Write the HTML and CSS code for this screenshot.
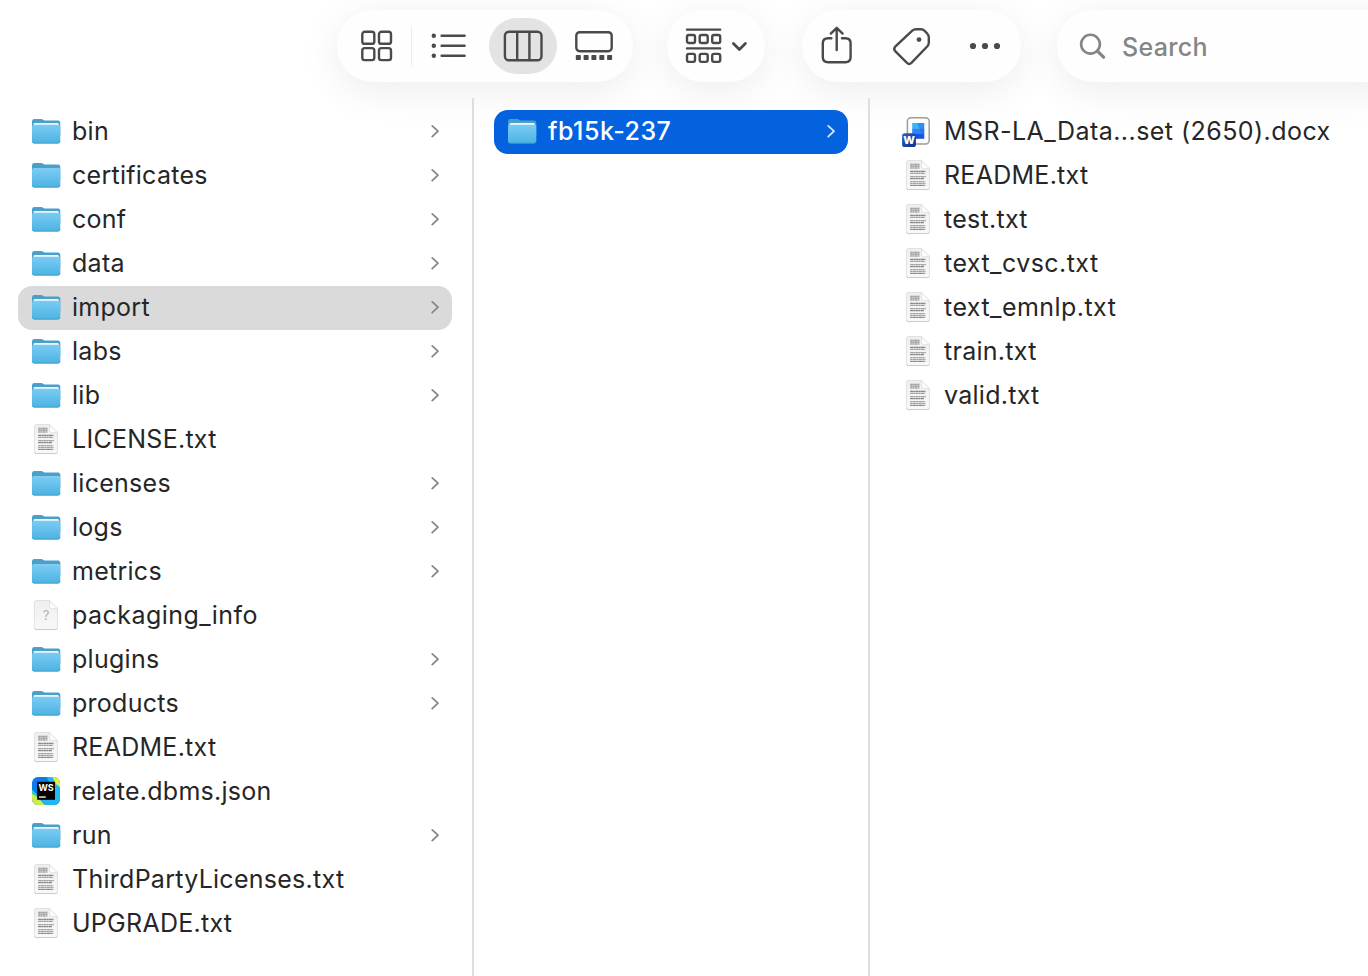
FILE: index.html
```html
<!DOCTYPE html>
<html lang="en">
<head>
  <meta charset="utf-8">
  <title>import</title>
  <link rel="stylesheet" href="styles.css">
</head>
<body>
  <svg class="sprite" width="0" height="0">
    <defs>
      <linearGradient id="folderFront" x1="0" y1="0" x2="0" y2="1">
        <stop offset="0" stop-color="#7accf3"/>
        <stop offset="1" stop-color="#4cb3e3"/>
      </linearGradient>
      <linearGradient id="paper" x1="0" y1="0" x2="0" y2="1">
        <stop offset="0" stop-color="#efefef"/>
        <stop offset="1" stop-color="#f8f8f8"/>
      </linearGradient>
      <linearGradient id="wordBadge" x1="0" y1="0" x2="1" y2="1">
        <stop offset="0" stop-color="#2a62c8"/>
        <stop offset="1" stop-color="#0a2f86"/>
      </linearGradient>
      <clipPath id="appClip"><rect x="1" y="1" width="28" height="28" rx="6"/></clipPath>
    </defs>

    <symbol id="folder" viewBox="0 0 30 30">
      <path d="M1 5.6Q1 3 3.4 3H10.2C12 3 12 4.4 14 4.4H27Q29.3 4.4 29.3 7V20H1Z" fill="#4a9fcb"/>
      <rect x="2.6" y="6.9" width="25.2" height="4" rx="1.4" fill="#eefaff"/>
      <path d="M1 10.6Q1 8.7 3 8.7H27.3Q29.3 8.7 29.3 10.6V25Q29.3 27.4 27 27.4H3.3Q1 27.4 1 25Z" fill="url(#folderFront)"/>
      <path d="M1.2 25.2Q1.4 27.1 3.4 27.1H26.9Q28.9 27.1 29.1 25.2" fill="none" stroke="#3998c6" stroke-width=".8"/>
    </symbol>

    <symbol id="folder-flat" viewBox="0 0 30 30">
      <path d="M1 5.6Q1 3 3.4 3H10.2C12 3 12 4.4 14 4.4H27Q29.3 4.4 29.3 7V20H1Z" fill="#4a9fcb"/>
      <path d="M1 10.6Q1 8.6 3 8.6H27.3Q29.3 8.6 29.3 10.6V25Q29.3 27.4 27 27.4H3.3Q1 27.4 1 25Z" fill="url(#folderFront)"/>
      <path d="M1.6 9.2Q2 8.7 3 8.7H27.3Q28.2 8.7 28.8 9.2" fill="none" stroke="#9bdcf8" stroke-width=".7"/>
      <path d="M1.2 25.2Q1.4 27.1 3.4 27.1H26.9Q28.9 27.1 29.1 25.2" fill="none" stroke="#3998c6" stroke-width=".8"/>
    </symbol>

    <symbol id="page" viewBox="0 0 30 32">
      <path d="M5.6 1.5H18.6L26.5 9.6V28.5Q26.5 30.5 24.5 30.5H5.4Q3.4 30.5 3.4 28.5V3.5Q3.4 1.5 5.6 1.5Z" fill="url(#paper)" stroke="#dadada" stroke-width=".8"/>
      <path d="M3.8 29.4Q4.2 30.6 5.4 30.6H24.5Q25.8 30.6 26.2 29.4" fill="none" stroke="#c4c4c4" stroke-width=".8"/>
      <path d="M18.6 1.6V7.6Q18.6 9.6 20.6 9.6H26.4Z" fill="#fff" stroke="#dadada" stroke-width=".7"/>
    </symbol>

    <symbol id="text-file" viewBox="0 0 30 32">
      <use href="#page" width="30" height="32"/>
      <g fill="none" stroke="#858585" stroke-width="1.1">
        <path d="M7.2 5.2h9.4M7.2 7.1h9.6M7.2 9h9.4" stroke-dasharray="2.6 .3 1.5 .2"/>
        <path d="M7.2 12.4h15.4M7.2 14.3h15M7.2 17.8h15.6M7.2 19.6h13.8" stroke-dasharray="3 .3 1.8 .3"/>
        <path d="M7.2 22.8h15M7.2 24.7h15.4M7.2 26.5h15" stroke-dasharray="2.2 .3 3.2 .3"/>
      </g>
    </symbol>

    <symbol id="chevron" viewBox="0 0 10 14">
      <path d="M2.2 1.8L8 7.2 2.2 12.6" fill="none" stroke="currentColor" stroke-width="1.7" stroke-linecap="round" stroke-linejoin="round"/>
    </symbol>
  </svg>

  <header class="toolbar">
    <div class="pill views">
      <button class="tool tool-grid" aria-label="Icons">
        <svg width="32" height="32" viewBox="0 0 32 32">
          <g class="line">
            <rect x="1.3" y="1.8" width="12" height="12" rx="2.4"/>
            <rect x="18" y="1.8" width="12" height="12" rx="2.4"/>
            <rect x="1.3" y="18.1" width="12" height="12" rx="2.4"/>
            <rect x="18" y="18.1" width="12" height="12" rx="2.4"/>
          </g>
        </svg>
      </button>
      <span class="separator"></span>
      <button class="tool tool-list" aria-label="List">
        <svg width="36" height="26" viewBox="0 0 36 26">
          <g class="solid"><circle cx="2.8" cy="2.8" r="2.2"/><circle cx="2.8" cy="12.8" r="2.2"/><circle cx="2.8" cy="22.7" r="2.2"/></g>
          <path class="line" d="M10.6 2.8H33.6M10.6 12.8H33.6M10.6 22.7H33.6"/>
        </svg>
      </button>
      <button class="tool tool-columns active" aria-label="Columns">
        <svg width="40" height="32" viewBox="0 0 40 32">
          <rect class="line" x="1.9" y="1.8" width="36.6" height="28.4" rx="4"/>
          <path class="line" d="M14.2 2V30M26.4 2V30"/>
        </svg>
      </button>
      <button class="tool tool-gallery" aria-label="Gallery">
        <svg width="38" height="30" viewBox="0 0 38 30">
          <rect class="line" x="1.3" y="1.2" width="35.4" height="19" rx="3.4"/>
          <g class="solid">
            <rect x=".8" y="24" width="5" height="5" rx=".8"/><rect x="8.6" y="24" width="5" height="5" rx=".8"/>
            <rect x="16.4" y="24" width="5" height="5" rx=".8"/><rect x="24.3" y="24" width="5" height="5" rx=".8"/>
            <rect x="32.1" y="24" width="5" height="5" rx=".8"/>
          </g>
        </svg>
      </button>
    </div>

    <button class="pill group-by" aria-label="Group">
      <svg width="36" height="36" viewBox="0 0 36 36">
        <path class="line" d="M2 1.6H35.2M2 20.4H35.2"/>
        <g class="line">
          <rect x="2" y="7" width="8" height="8" rx="1.8"/><rect x="14.7" y="7" width="8" height="8" rx="1.8"/><rect x="27.2" y="7" width="8" height="8" rx="1.8"/>
          <rect x="2" y="25.9" width="8" height="8" rx="1.8"/><rect x="14.7" y="25.9" width="8" height="8" rx="1.8"/><rect x="27.2" y="25.9" width="8" height="8" rx="1.8"/>
        </g>
      </svg>
      <svg width="16" height="10" viewBox="0 0 16 10"><path class="line heavy" d="M2.4 2.6L8.4 8.6 14.4 2.6"/></svg>
    </button>

    <div class="pill actions">
      <button class="tool" aria-label="Share">
        <svg width="32" height="38" viewBox="0 0 32 38">
          <path class="line" d="M10.4 12.2H7Q1.8 12.2 1.8 17.2V31Q1.8 36.2 7 36.2H24.4Q29.6 36.2 29.6 31V17.2Q29.6 12.2 24.4 12.2H21"/>
          <path class="line" d="M15.7 24V2M9.8 7.6L15.7 1.8 21.6 7.6"/>
        </svg>
      </button>
      <button class="tool" aria-label="Tags">
        <svg width="40" height="40" viewBox="0 0 40 40">
          <path class="line" d="M3.2 20.7L20 4.8Q21.8 3.2 24 3.2H29Q31 3.2 32.4 4.6L35.4 7.8Q36.8 9.2 36.8 11.2V16.8Q36.8 18.8 35.4 20.3L19.4 36.9Q17.2 38.9 15 36.9L3.2 25.2Q1.2 23 3.2 20.7Z"/>
          <circle class="solid" cx="27" cy="13.6" r="2.4"/>
        </svg>
      </button>
      <button class="tool" aria-label="More">
        <svg width="32" height="8" viewBox="0 0 32 8"><g class="solid"><circle cx="4" cy="4" r="3.1"/><circle cx="16" cy="4" r="3.1"/><circle cx="28" cy="4" r="3.1"/></g></svg>
      </button>
    </div>

    <div class="pill search">
      <svg width="28" height="28" viewBox="0 0 28 28"><circle cx="11.5" cy="12.2" r="9.4"/><path d="M18.4 19.2L24.6 25.2" stroke-width="3.2"/></svg>
      <span>Search</span>
    </div>
  </header>

  <main class="browser">
    <ul class="column">
      <li class="row"><svg class="icon"><use href="#folder"/></svg><span class="name">bin</span><svg class="chevron"><use href="#chevron"/></svg></li>
      <li class="row"><svg class="icon"><use href="#folder-flat"/></svg><span class="name">certificates</span><svg class="chevron"><use href="#chevron"/></svg></li>
      <li class="row"><svg class="icon"><use href="#folder"/></svg><span class="name">conf</span><svg class="chevron"><use href="#chevron"/></svg></li>
      <li class="row"><svg class="icon"><use href="#folder"/></svg><span class="name">data</span><svg class="chevron"><use href="#chevron"/></svg></li>
      <li class="row current"><svg class="icon"><use href="#folder"/></svg><span class="name">import</span><svg class="chevron"><use href="#chevron"/></svg></li>
      <li class="row"><svg class="icon"><use href="#folder"/></svg><span class="name">labs</span><svg class="chevron"><use href="#chevron"/></svg></li>
      <li class="row"><svg class="icon"><use href="#folder"/></svg><span class="name">lib</span><svg class="chevron"><use href="#chevron"/></svg></li>
      <li class="row"><svg class="icon file"><use href="#text-file"/></svg><span class="name">LICENSE.txt</span></li>
      <li class="row"><svg class="icon"><use href="#folder-flat"/></svg><span class="name">licenses</span><svg class="chevron"><use href="#chevron"/></svg></li>
      <li class="row"><svg class="icon"><use href="#folder"/></svg><span class="name">logs</span><svg class="chevron"><use href="#chevron"/></svg></li>
      <li class="row"><svg class="icon"><use href="#folder-flat"/></svg><span class="name">metrics</span><svg class="chevron"><use href="#chevron"/></svg></li>
      <li class="row">
        <svg class="icon file" viewBox="0 0 30 32">
          <use href="#page" width="30" height="32"/>
          <text x="15" y="20.5" text-anchor="middle" class="unknown-mark">?</text>
        </svg>
        <span class="name wide">packaging_info</span>
      </li>
      <li class="row"><svg class="icon"><use href="#folder"/></svg><span class="name">plugins</span><svg class="chevron"><use href="#chevron"/></svg></li>
      <li class="row"><svg class="icon"><use href="#folder"/></svg><span class="name">products</span><svg class="chevron"><use href="#chevron"/></svg></li>
      <li class="row"><svg class="icon file"><use href="#text-file"/></svg><span class="name">README.txt</span></li>
      <li class="row">
        <svg class="icon" viewBox="0 0 30 30">
          <g clip-path="url(#appClip)">
            <rect width="30" height="30" fill="#0b7be8"/>
            <path d="M17 0H30V14L25 10Z" fill="#e3ef45"/>
            <path d="M15 0H21L25 8 30 12V30H14L22 12Z" fill="#22b9ef"/>
            <path d="M0 12L7 20 14 30H0Z" fill="#2cc9dd"/>
            <path d="M0 17L6 21 10 25 15 30H0Z" fill="#cdec4a"/>
            <path d="M10 24H30V30H15Z" fill="#25b5ee"/>
            <rect x="6.2" y="5.8" width="17.8" height="18" fill="#000"/>
            <text x="15" y="14.8" text-anchor="middle" class="ws-letters">WS</text>
            <rect x="8" y="20.4" width="6.8" height="1.3" fill="#fff"/>
          </g>
        </svg>
        <span class="name">relate.dbms.json</span>
      </li>
      <li class="row"><svg class="icon"><use href="#folder"/></svg><span class="name">run</span><svg class="chevron"><use href="#chevron"/></svg></li>
      <li class="row"><svg class="icon file"><use href="#text-file"/></svg><span class="name">ThirdPartyLicenses.txt</span></li>
      <li class="row"><svg class="icon file"><use href="#text-file"/></svg><span class="name">UPGRADE.txt</span></li>
    </ul>

    <ul class="column middle">
      <li class="row selected"><svg class="icon"><use href="#folder"/></svg><span class="name">fb15k-237</span><svg class="chevron"><use href="#chevron"/></svg></li>
    </ul>

    <ul class="column last">
      <li class="row">
        <svg class="icon file" viewBox="0 0 30 32">
          <rect x="4.4" y="2.7" width="21.8" height="26.2" rx="3.6" fill="#fcfcfc" stroke="#9d9d9d" stroke-width="1.5"/>
          <rect x="9.2" y="8" width="12" height="5.6" fill="#35b5fa"/>
          <rect x="9.2" y="13.4" width="12" height="5.4" fill="#2588f5"/>
          <rect x="12" y="18.6" width="9.2" height="5.2" fill="#1c50e2"/>
          <path d="M14.4 8H21.2V23.8Q18 20 17.4 16Z" fill="#1f62ee" opacity=".45"/>
          <rect x="-.9" y="18.2" width="13.8" height="13.8" rx="2.6" fill="url(#wordBadge)"/>
          <text x="6" y="29" text-anchor="middle" class="word-letter">W</text>
        </svg>
        <span class="name wide">MSR-LA_Data...set (2650).docx</span>
      </li>
      <li class="row"><svg class="icon file"><use href="#text-file"/></svg><span class="name">README.txt</span></li>
      <li class="row"><svg class="icon file"><use href="#text-file"/></svg><span class="name">test.txt</span></li>
      <li class="row"><svg class="icon file"><use href="#text-file"/></svg><span class="name wide">text_cvsc.txt</span></li>
      <li class="row"><svg class="icon file"><use href="#text-file"/></svg><span class="name wide">text_emnlp.txt</span></li>
      <li class="row"><svg class="icon file"><use href="#text-file"/></svg><span class="name">train.txt</span></li>
      <li class="row"><svg class="icon file"><use href="#text-file"/></svg><span class="name">valid.txt</span></li>
    </ul>
  </main>
</body>
</html>
```
FILE: styles.css
```css
* {
  box-sizing: border-box;
  margin: 0;
  padding: 0;
}

body {
  height: 976px;
  display: flex;
  flex-direction: column;
  overflow: hidden;
  background-color: #fff;
  color: #262626;
  font-family: Inter, "Liberation Sans", sans-serif;
  font-size: 25px;
}

svg {
  display: block;
  flex: none;
  overflow: visible;
}

.sprite {
  height: 0;
}

/* toolbar */
.toolbar {
  height: 98px;
  flex: none;
  display: flex;
  align-items: flex-start;
  padding: 10px 0 0 337px;
}

.pill {
  height: 72px;
  flex: none;
  display: flex;
  align-items: center;
  border: none;
  border-radius: 36px;
  background-color: #fefefe;
  box-shadow: 0 8px 40px rgba(0, 0, 0, 0.08);
}

.tool {
  display: flex;
  align-items: center;
  justify-content: center;
  border: none;
  background: none;
}

.line {
  fill: none;
  stroke: #4a4a4a;
  stroke-width: 2.4;
  stroke-linecap: round;
  stroke-linejoin: round;
}

.heavy {
  stroke-width: 2.8;
}

.solid {
  fill: #4a4a4a;
}

.views {
  width: 296px;
  margin-right: 34px;
  padding-left: 24px;
}

.separator {
  width: 1px;
  height: 40px;
  margin: 0 19px 0 18px;
  background-color: #eee;
}

.tool-columns {
  width: 68px;
  height: 56px;
  margin: 0 18px 0 22px;
}

.active {
  border-radius: 28px;
  background-color: #e3e3e3;
}

.group-by {
  width: 98px;
  margin-right: 37px;
  padding-left: 18px;
  gap: 10px;
}

.actions {
  width: 219px;
  margin-right: 36px;
  padding-left: 19px;
  gap: 39px;
}

.actions .tool:first-child {
  margin-top: -3px;
}

.actions .tool:nth-child(2) {
  margin-right: -2px;
}

.search {
  width: 360px;
  padding-left: 22px;
  gap: 15px;
  color: #858585;
  font-size: 25px;
  font-weight: 500;
  letter-spacing: 0.3px;
}

.search span {
  padding-top: 2px;
}

.search svg {
  fill: none;
  stroke: #858585;
  stroke-width: 2.6;
  stroke-linecap: round;
}

/* column browser */
.browser {
  flex: 1;
  display: flex;
  min-height: 0;
}

.column {
  width: 474px;
  flex: none;
  padding: 12px 20px 0 18px;
  border-right: 2px solid #dedede;
  list-style: none;
}

.middle {
  width: 396px;
  padding-left: 20px;
}

.last {
  flex: 1;
  padding-left: 20px;
  border-right: none;
}

.row {
  height: 44px;
  display: flex;
  align-items: center;
  gap: 11px;
  padding: 0 12px 2px 13px;
  border-radius: 14px;
}

.icon {
  width: 30px;
  height: 30px;
}

.file {
  height: 32px;
}

.name {
  flex: 1;
  white-space: nowrap;
  letter-spacing: 0.27px;
}

.wide {
  letter-spacing: 0.45px;
}

.chevron {
  width: 10px;
  height: 14px;
  color: #858585;
}

.current {
  background-color: #dadada;
}

.selected {
  background-color: #0462de;
  color: #fff;
  font-weight: 500;
}

.selected .name {
  letter-spacing: 0.5px;
}

.selected .chevron {
  color: #dfeaff;
}

/* lettering inside file icons */
.unknown-mark {
  fill: #b0b0b0;
  font-size: 13px;
}

.word-letter {
  fill: #fff;
  font-size: 11px;
  font-weight: 800;
}

.ws-letters {
  fill: #fff;
  font-size: 9px;
  font-weight: 700;
}
```
